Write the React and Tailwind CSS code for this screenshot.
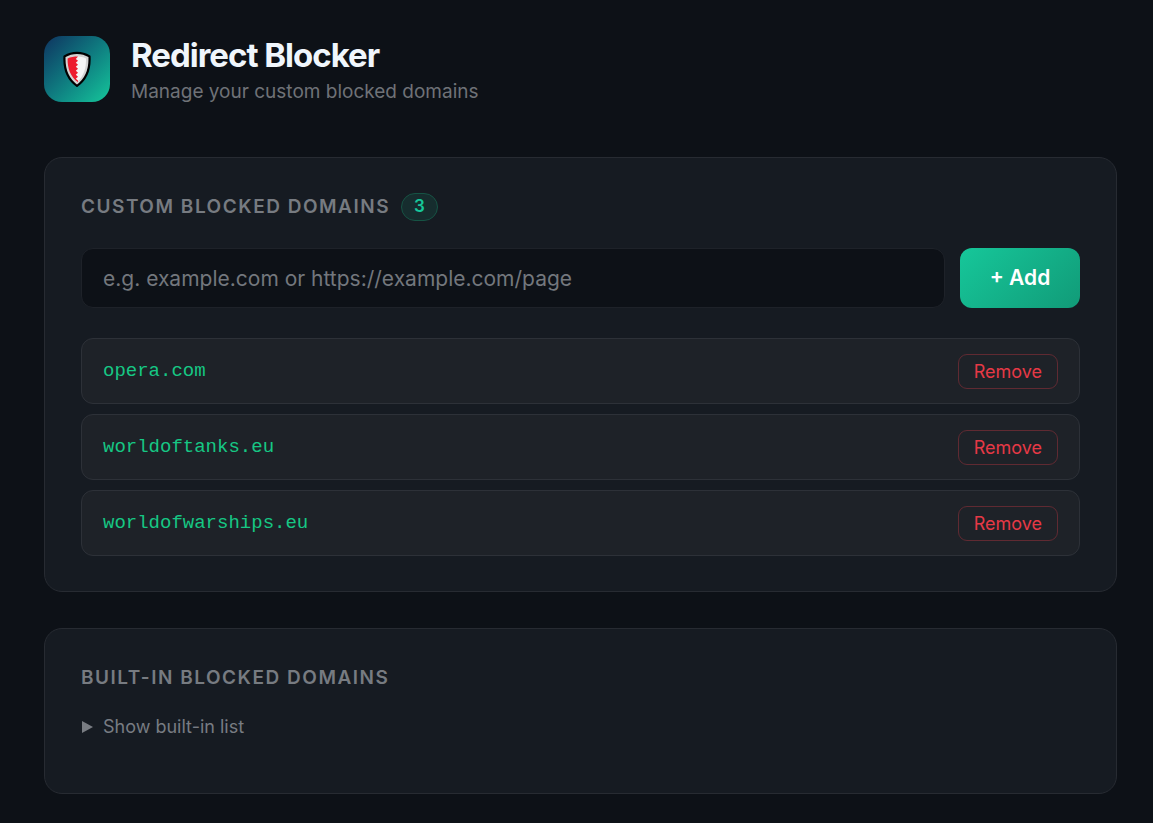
import React, { useState } from 'react';

const initialDomains = ['opera.com', 'worldoftanks.eu', 'worldofwarships.eu'];
const builtInDomains = ['doubleclick.net', 'popads.net', 'adsterra.com'];

function ShieldLogo() {
  return (
    <div className="flex size-[66px] shrink-0 items-center justify-center rounded-[18px] bg-linear-135 from-[#0f3460] to-[#16c79a]">
      <svg width="28" height="36" viewBox="0 0 28 36" aria-hidden="true">
        <path d="M14 1.8C10.3 1.8 5.4 3 1.5 5.4C0.8 18 4.8 28.4 14 34.9C23.2 28.4 27.2 18 26.5 5.4C22.6 3 17.7 1.8 14 1.8Z" fill="#d3d3d3" stroke="#000" strokeWidth="2.2" strokeLinejoin="round" />
        <path d="M13 5.4C17 5.4 20.5 6 23 7.4C23.3 17.4 20.5 25.4 14 31L13 29.4Z" fill="#f5f5f5" />
        <path d="M15 5.4C11 5.4 7.5 6 4.6 7.4C4.4 17.4 7.4 25.4 14.8 31.2L15 29.4L12.8 27.8L15 25.8L12.8 23.8L15 21.8L12.8 19.8L15 17.8L12.8 15.8L15 13.8L12.8 11.8L15 9.8L12.8 8Z" fill="#ed1c2e" />
      </svg>
    </div>
  );
}

function Card({ children }) {
  return (
    <section className="rounded-[18px] border border-[#272b32] bg-[#161b22] px-9 py-[35px]">
      {children}
    </section>
  );
}

function CardTitle({ children }) {
  return (
    <h2 className="text-[19px] leading-7 font-semibold tracking-[0.08em] text-[#777b81] uppercase">
      {children}
    </h2>
  );
}

function DomainRow({ domain, onRemove }) {
  return (
    <li className="flex h-[66px] items-center justify-between rounded-xl border border-[#2d3138] bg-[#1e2228] px-[21px]">
      <span className="font-['Courier_New','Liberation_Mono',monospace] text-[19px] text-[#16c784]">{domain}</span>
      <button
        type="button"
        onClick={onRemove}
        className="rounded-[9px] border border-[#602a32] px-[15px] py-1 text-[18px] leading-[25px] text-[#e63946] hover:bg-[#e63946]/15"
      >
        Remove
      </button>
    </li>
  );
}

function BuiltInList() {
  const [open, setOpen] = useState(false);

  return (
    <details className="group mt-[21px] mb-[17px]" onToggle={(e) => setOpen(e.currentTarget.open)}>
      <summary className="flex cursor-pointer list-none items-center gap-[10px] text-[18px] leading-7 text-[#787c82]">
        <svg width="12" height="12" viewBox="0 0 12 12" className="group-open:rotate-90" aria-hidden="true">
          <path d="M1 0L12 6L1 12Z" fill="currentColor" />
        </svg>
        Show built-in list
      </summary>
      {open && (
        <ul className="mt-3 flex flex-col gap-2 text-[18px] text-[#787c82]">
          {builtInDomains.map((domain) => (
            <li key={domain}>{domain}</li>
          ))}
        </ul>
      )}
    </details>
  );
}

function App() {
  const [domains, setDomains] = useState(initialDomains);
  const [value, setValue] = useState('');

  const handleAdd = (e) => {
    e.preventDefault();
    const domain = value.trim().replace(/^https?:\/\//, '').split('/')[0];
    if (domain && !domains.includes(domain)) {
      setDomains([...domains, domain]);
    }
    setValue('');
  };

  return (
    <div className="min-h-screen bg-[#0d1117] pt-9 pr-9 pb-7 pl-11 font-['Inter',sans-serif]">
      <header className="mb-[47px] flex items-start gap-[21px]">
        <ShieldLogo />
        <div>
          <h1 className="text-[33px] leading-[38px] font-bold tracking-[-1px] text-[#f0f6fc]">Redirect Blocker</h1>
          <p className="text-[19px] leading-9 text-[#6f7277]">Manage your custom blocked domains</p>
        </div>
      </header>

      <main className="flex flex-col gap-9">
        <Card>
          <div className="mb-[27px] flex items-center gap-[11px]">
            <CardTitle>Custom Blocked Domains</CardTitle>
            <span className="flex h-7 min-w-9 items-center justify-center rounded-full border border-[#165344] bg-[#162d2e] px-3 text-[17px] font-semibold text-[#16c79a]">
              {domains.length}
            </span>
          </div>

          <form onSubmit={handleAdd} className="mb-[30px] flex gap-[15px]">
            <input
              type="text"
              aria-label="Domain to block"
              value={value}
              onChange={(e) => setValue(e.target.value)}
              placeholder="e.g. example.com or https://example.com/page"
              className="h-[60px] min-w-0 flex-1 rounded-xl border border-[#1e2229] bg-[#0d1117] px-[21px] text-[21px] text-[#f0f6fc] outline-none placeholder:text-[#73777d] focus:border-[#16c79a]"
            />
            <button
              type="submit"
              className="h-[60px] w-[120px] rounded-xl bg-linear-135 from-[#16c79a] to-[#119b78] text-[21px] font-semibold text-white"
            >
              + Add
            </button>
          </form>

          <ul className="flex flex-col gap-[10px]">
            {domains.map((domain) => (
              <DomainRow
                key={domain}
                domain={domain}
                onRemove={() => setDomains(domains.filter((d) => d !== domain))}
              />
            ))}
          </ul>
        </Card>

        <Card>
          <CardTitle>Built-in Blocked Domains</CardTitle>
          <BuiltInList />
        </Card>
      </main>
    </div>
  );
}

export default App;
